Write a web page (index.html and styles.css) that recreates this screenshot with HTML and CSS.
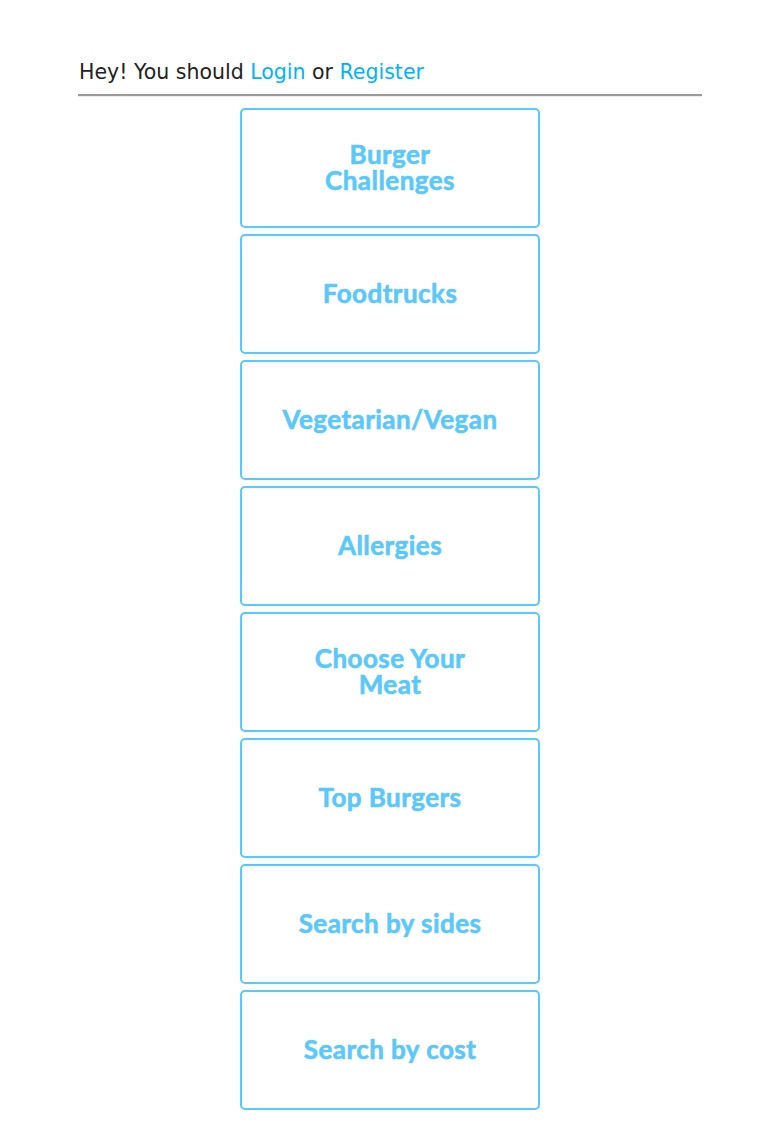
FILE: index.html
```html
<!DOCTYPE html>
<html>
<head>
<meta charset="utf-8">
<link rel="stylesheet" href="styles.css">
</head>
<body>
<div class="page">
  <div class="greeting">Hey! You should <a class="link" href="#">Login</a> or <a class="link" href="#">Register</a></div>
  <div class="rule"></div>
  <div class="menu">
    <a class="tile" href="#"><span>Burger<br>Challenges</span></a>
    <a class="tile" href="#"><span>Foodtrucks</span></a>
    <a class="tile" href="#"><span>Vegetarian/Vegan</span></a>
    <a class="tile" href="#"><span>Allergies</span></a>
    <a class="tile" href="#"><span>Choose Your<br>Meat</span></a>
    <a class="tile" href="#"><span>Top Burgers</span></a>
    <a class="tile" href="#"><span>Search by sides</span></a>
    <a class="tile" href="#"><span>Search by cost</span></a>
  </div>
</div>
</body>
</html>
```
FILE: styles.css
```css
html, body {
  margin: 0;
  padding: 0;
  background: #fff;
}
.page {
  width: 624px;
  margin: 0 0 0 78px;
  padding-top: 58px;
}
.greeting {
  font-family: "DejaVu Sans", Verdana, sans-serif;
  font-size: 20.5px;
  line-height: 28px;
  color: #222;
  padding-left: 1px;
}
.link {
  color: #00b2ff;
  text-decoration: none;
}
.rule {
  margin-top: 8px;
  border-top: 2px solid #9a9a9a;
  border-bottom: 1px solid #ececec;
}
.menu {
  display: flex;
  flex-direction: column;
  align-items: center;
  gap: 6px;
  margin-top: 11px;
}
.tile {
  box-sizing: border-box;
  width: 300px;
  height: 120px;
  padding-bottom: 2px;
  border: 2px solid #5ac8fa;
  border-radius: 5px;
  display: flex;
  align-items: center;
  justify-content: center;
  text-align: center;
  text-decoration: none;
  color: #5ac8fa;
  font-family: Lato, "Open Sans", sans-serif;
  font-weight: 700;
  font-size: 26px;
  line-height: 26px;
  letter-spacing: 0.45px;
  -webkit-text-stroke: 0.6px #5ac8fa;
}
```
